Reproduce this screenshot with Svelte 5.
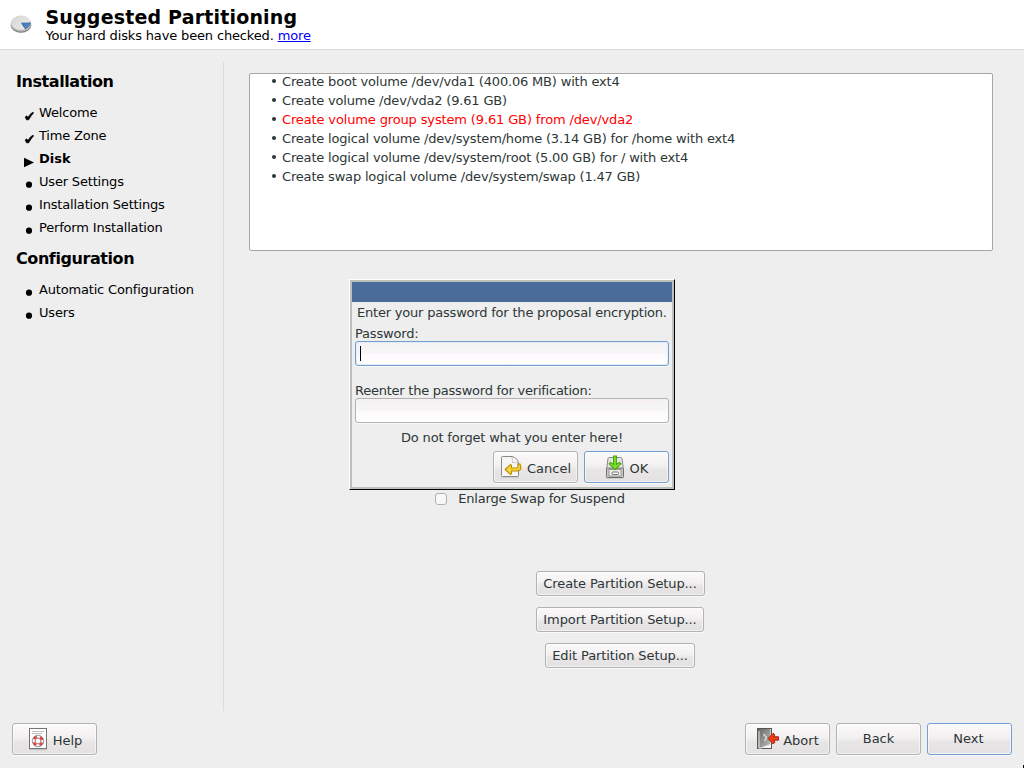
<script>
  const phases = [
    {
      title: 'Installation',
      steps: [
        { label: 'Welcome', state: 'done' },
        { label: 'Time Zone', state: 'done' },
        { label: 'Disk', state: 'current' },
        { label: 'User Settings', state: 'todo' },
        { label: 'Installation Settings', state: 'todo' },
        { label: 'Perform Installation', state: 'todo' }
      ]
    },
    {
      title: 'Configuration',
      steps: [
        { label: 'Automatic Configuration', state: 'todo' },
        { label: 'Users', state: 'todo' }
      ]
    }
  ];

  const proposal = [
    { text: 'Create boot volume /dev/vda1 (400.06 MB) with ext4' },
    { text: 'Create volume /dev/vda2 (9.61 GB)' },
    { text: 'Create volume group system (9.61 GB) from /dev/vda2', warn: true },
    { text: 'Create logical volume /dev/system/home (3.14 GB) for /home with ext4' },
    { text: 'Create logical volume /dev/system/root (5.00 GB) for / with ext4' },
    { text: 'Create swap logical volume /dev/system/swap (1.47 GB)' }
  ];
</script>

<div class="screen">
  <header>
    <svg class="disk" width="22" height="20" viewBox="0 0 22 20">
      <defs>
        <linearGradient id="plate" x1="0" y1="0" x2="1" y2="1">
          <stop offset="0" stop-color="#d4d4d0" />
          <stop offset="1" stop-color="#eeeeec" />
        </linearGradient>
      </defs>
      <ellipse cx="11" cy="11.2" rx="10.3" ry="7.5" fill="#777873" />
      <ellipse cx="11" cy="10" rx="10.3" ry="7.8" fill="#b3b4af" />
      <ellipse cx="11" cy="8.8" rx="9.8" ry="7.3" fill="url(#plate)" />
      <path d="M11 8.8 L20.8 8.6 Q20.8 13 15 15.2 Z" fill="#3465a4" />
      <path d="M12 9.2 L20 9 L15 12.5 Z" fill="#4a7dc0" />
      <path d="M14 13.5 L20.2 10.5" stroke="#8fb3df" stroke-width=".8" />
    </svg>
    <div class="heading">
      <h1>Suggested Partitioning</h1>
      <p>Your hard disks have been checked. <a href="#more">more</a></p>
    </div>
  </header>

  <div class="body">
    <nav>
      {#each phases as phase}
        <h2>{phase.title}</h2>
        <ul>
          {#each phase.steps as step}
            <li class={step.state}>
              <svg width="11" height="12" viewBox="0 0 11 12">
                {#if step.state === 'done'}
                  <path d="M1 7 L2.8 5.8 L4 7.2 Q5.8 3.8 9 2 L9.6 3 Q6.8 6 4.8 9.8 L2.6 10 Z" fill="#000" stroke="#000" stroke-width=".5" />
                {:else if step.state === 'current'}
                  <path d="M0 1.8 L10 6.5 L0 11.3 Z" fill="#000" />
                {:else}
                  <circle cx="5" cy="5.7" r="3.1" fill="#000" />
                {/if}
              </svg>
              <span>{step.label}</span>
            </li>
          {/each}
        </ul>
      {/each}
    </nav>

    <main>
      <ul class="proposal">
        {#each proposal as line}
          <li class:warn={line.warn}><i></i><span>{line.text}</span></li>
        {/each}
      </ul>
      <label class="swap"><i class="box"></i><span>Enlarge Swap for Suspend</span></label>
      <div class="setups">
        <button class="create">Create Partition Setup...</button>
        <button class="import">Import Partition Setup...</button>
        <button class="edit">Edit Partition Setup...</button>
      </div>
    </main>
  </div>

  <footer>
    <button class="big">
      <svg class="help-icon" width="20" height="24" viewBox="0 0 20 24">
        <path d="M1 22.5 H19" stroke="#c4c4c4" stroke-width="1.5" />
        <rect x="1.5" y="1.5" width="17" height="20" fill="#fff" stroke="#74766f" />
        <path d="M4 4.5 H16 M4 6.5 H14" stroke="#bfc0bd" />
        <circle cx="10" cy="14" r="4.4" fill="none" stroke="#f4f4f4" stroke-width="3" />
        <circle cx="10" cy="14" r="4.4" fill="none" stroke="#e04444" stroke-width="2.4" stroke-dasharray="3.6 3.31" stroke-dashoffset="-1.6" />
        <circle cx="10" cy="14" r="5.8" fill="none" stroke="#888" stroke-width=".8" />
        <circle cx="10" cy="14" r="2.8" fill="#fff" stroke="#a55" stroke-width=".8" />
      </svg>
      <span>Help</span>
    </button>
    <div class="nav-buttons">
      <button class="big abort">
        <svg class="abort-icon" width="24" height="24" viewBox="0 0 24 24">
          <defs>
            <linearGradient id="door" x1="0" y1="0" x2="1" y2="1">
              <stop offset="0" stop-color="#666864" />
              <stop offset="1" stop-color="#bfc0bd" />
            </linearGradient>
          </defs>
          <rect x="1.5" y="1.5" width="14" height="20" fill="#fafafa" stroke="#555753" />
          <path d="M2 2 H14.5 V17.5 L3.5 21.5 H2 Z" fill="url(#door)" />
          <path d="M3 21 V4 M3.5 21.5 L14.5 17.5" stroke="#e8e8e8" fill="none" />
          <path d="M7.5 7 L10.5 10.5 L8.5 14" fill="none" stroke="#ddd" stroke-width="1.4" />
          <path d="M12 11.5 L17.2 6.2 L19 8 L17.6 9.7 H22.5 V13.2 H17.6 L19 15.2 L17.2 17 Z" fill="#ef3d16" stroke="#a01c08" stroke-width=".9" />
        </svg>
        <span>Abort</span>
      </button>
      <button class="big plain">Back</button>
      <button class="big plain focus">Next</button>
    </div>
  </footer>

  <section class="dialog">
    <div class="frame">
      <div class="titlebar"></div>
      <p class="intro">Enter your password for the proposal encryption.</p>
      <p class="field-label">Password:</p>
      <div class="input focus"><i class="caret"></i></div>
      <p class="field-label again">Reenter the password for verification:</p>
      <div class="input"></div>
      <p class="note">Do not forget what you enter here!</p>
      <div class="actions">
        <button class="big">
          <svg class="cancel-icon" width="22" height="24" viewBox="0 0 22 24">
            <path d="M1 22.5 H19" stroke="#cfcfcf" stroke-width="1.5" />
            <path d="M2.5 1.5 H12 Q17.5 3 18.5 8 V20.5 Q18.5 21.5 17.5 21.5 H2.5 Q1.5 21.5 1.5 20.5 V2.5 Q1.5 1.5 2.5 1.5 Z" fill="#f6f6f5" stroke="#888a85" />
            <path d="M11.5 2 Q13.5 4 12.5 7.5 Q16 6.5 18 8.5" fill="#fff" stroke="#b8b8b5" stroke-width=".8" />
            <path d="M5.2 14.5 L10.5 9.6 L11.5 10.6 V13 H16.5 Q18.8 12.8 17.8 9.4 L19.8 8.8 Q23 15.8 17 16 H11.5 V18.4 L10.5 19.4 Z" fill="#f3d83b" stroke="#bd8b00" stroke-width="1.1" />
          </svg>
          <span>Cancel</span>
        </button>
        <button class="big focus">
          <svg class="ok-icon" width="20" height="24" viewBox="0 0 20 24">
            <path d="M1 23 H19" stroke="#bbb" />
            <rect x="1.5" y="13" width="17" height="9.5" rx="1" fill="#c9cac7" stroke="#6d6f6a" />
            <path d="M1.8 13 L3 3.5 Q3.2 2.5 4.5 2.5 H15.5 Q16.8 2.5 17 3.5 L18.2 13 Z" fill="#e4e5e2" stroke="#888a85" />
            <path d="M4 14.5 H16 V21 H4 Z" fill="#eeeeec" stroke="#888a85" stroke-width=".8" />
            <rect x="7" y="17" width="6.5" height="2.5" rx=".8" fill="#fff" stroke="#666" stroke-width=".9" />
            <path d="M8.6 1 H11.4 V9.5 L14.5 7.4 L15.8 8.8 L10 14.6 L4.2 8.8 L5.5 7.4 L8.6 9.5 Z" fill="#7fe32c" stroke="#4aa30d" stroke-width="1.1" />
          </svg>
          <span>OK</span>
        </button>
      </div>
    </div>
  </section>

  <i class="pointer"></i>
</div>

<style>
  :global(body) { background: #eee; }
  * { box-sizing: border-box; }
  .screen {
    position: relative; width: 1024px; height: 768px; overflow: hidden;
    display: flex; flex-direction: column;
    background: #eee; color: #2d3636;
    font: 13px/19px "DejaVu Sans", sans-serif;
    letter-spacing: -.18px;
  }
  h1, h2, p, ul { margin: 0; padding: 0; }
  ul { list-style: none; }
  header { height: 50px; flex: none; display: flex; background: #fff; border-bottom: 1px solid #d9d9d9; color: #000; }
  .disk { margin: 14px 0 0 10px; }
  .heading { margin: 6px 0 0 13.5px; white-space: nowrap; }
  h1 { font-size: 19px; line-height: 22px; letter-spacing: .18px; }
  .heading p { line-height: 15px; letter-spacing: -.15px; }
  a { color: #00f; }
  .body { display: flex; height: 661px; flex: none; }
  nav { width: 224px; height: 649px; margin-top: 12px; padding-left: 16px; border-right: 1px solid #dcdcdc; color: #000; }
  h2 { font-size: 16px; line-height: 20px; height: 39px; padding-top: 10px; white-space: nowrap; letter-spacing: -.42px; }
  nav li { height: 23px; display: flex; align-items: center; padding-left: 8px; }
  nav li svg { margin: 6px 4px 0 0; flex: none; }
  .current span { font-weight: bold; letter-spacing: 0; }
  main { width: 744px; margin: 23px 0 0 25px; display: flex; flex-direction: column; align-items: center; }
  .proposal { width: 744px; height: 178px; background: #fff; border: 1px solid #a6a6a6; border-radius: 2px; padding-left: 22px; }
  .proposal li { height: 19px; line-height: 15px; display: flex; white-space: nowrap; }
  .proposal i { width: 4px; height: 4px; border-radius: 2px; background: #2d3636; margin: 5px 6px 0 0; }
  .proposal .warn { color: #f00; letter-spacing: -.14px; }
  .swap { display: flex; margin-top: 238px; margin-right: 182px; height: 20px; line-height: 20px; white-space: nowrap; }
  .box { width: 12px; height: 12px; margin: 4px 11px 0 0; border: 1px solid #b0b1aa; border-radius: 3px; background: #f8f8f8; }
  .setups { display: flex; flex-direction: column; align-items: center; gap: 11px; margin: 62px 2px 0 0; letter-spacing: -.1px; }
  button {
    height: 25px; padding: 0; font: inherit; letter-spacing: inherit; line-height: 23px; color: inherit; white-space: nowrap;
    border: 1px solid #b2b2b2; border-radius: 3px; box-shadow: 0 1px 0 #fafafa, inset 0 0 0 1px rgba(255,255,255,.6);
    background: linear-gradient(#fbf9fa, #f2f0f1 45%, #e8e5e7 60%, #e4e1e3);
  }
  .create { width: 169px; }
  .import { width: 168px; }
  .edit { width: 150px; }
  .big { width: 85px; height: 32px; display: flex; align-items: center; justify-content: center; gap: 5px; letter-spacing: 0; }
  .big span { padding-top: 3px; }
  .help-icon { margin-left: 1px; }
  .abort { gap: 3px; }
  .plain { line-height: 30px; padding-bottom: 1px; }
  .plain.focus { padding-right: 2px; }
  button.focus { border-color: #729fcf; }
  footer { display: flex; justify-content: space-between; padding: 12px 12px 0; }
  .nav-buttons { display: flex; gap: 6px; }
  .dialog {
    position: absolute; left: 349px; top: 279px; width: 326px; height: 211px; white-space: nowrap;
    border: 1px solid; border-color: #fff #000 #000 #fff;
  }
  .frame { height: 209px; border: 2px solid #bac1ba; background: #eee; padding: 0 3px; }
  .titlebar { height: 20px; margin: 0 -3px; background: #4a6c9b; }
  .intro { height: 21px; line-height: 21px; padding-left: 2px; letter-spacing: -.2px; }
  .field-label { height: 18px; line-height: 21px; }
  .field-label.again { margin-top: 14px; letter-spacing: -.24px; }
  .input { width: 314px; height: 25px; border: 1px solid #b2b2b2; border-radius: 3px; background: linear-gradient(#f6f0f4, #f5f5f5 30%, #f6f6f6 50%, #fdf9fd 51%, #fff); box-shadow: 0 1px 0 #fafafa; padding: 4px; }
  .input.focus { border-color: #729fcf; box-shadow: inset 0 0 0 1px #e3ecf7, 0 1px 0 #fafafa; }
  .caret { display: block; width: 1px; height: 15px; background: #000; }
  .note { height: 28px; line-height: 29px; text-align: center; }
  .actions { display: flex; justify-content: flex-end; gap: 6px; }
  .pointer { position: absolute; right: 0; bottom: 0; width: 1px; height: 3px; background: #000; }
</style>
